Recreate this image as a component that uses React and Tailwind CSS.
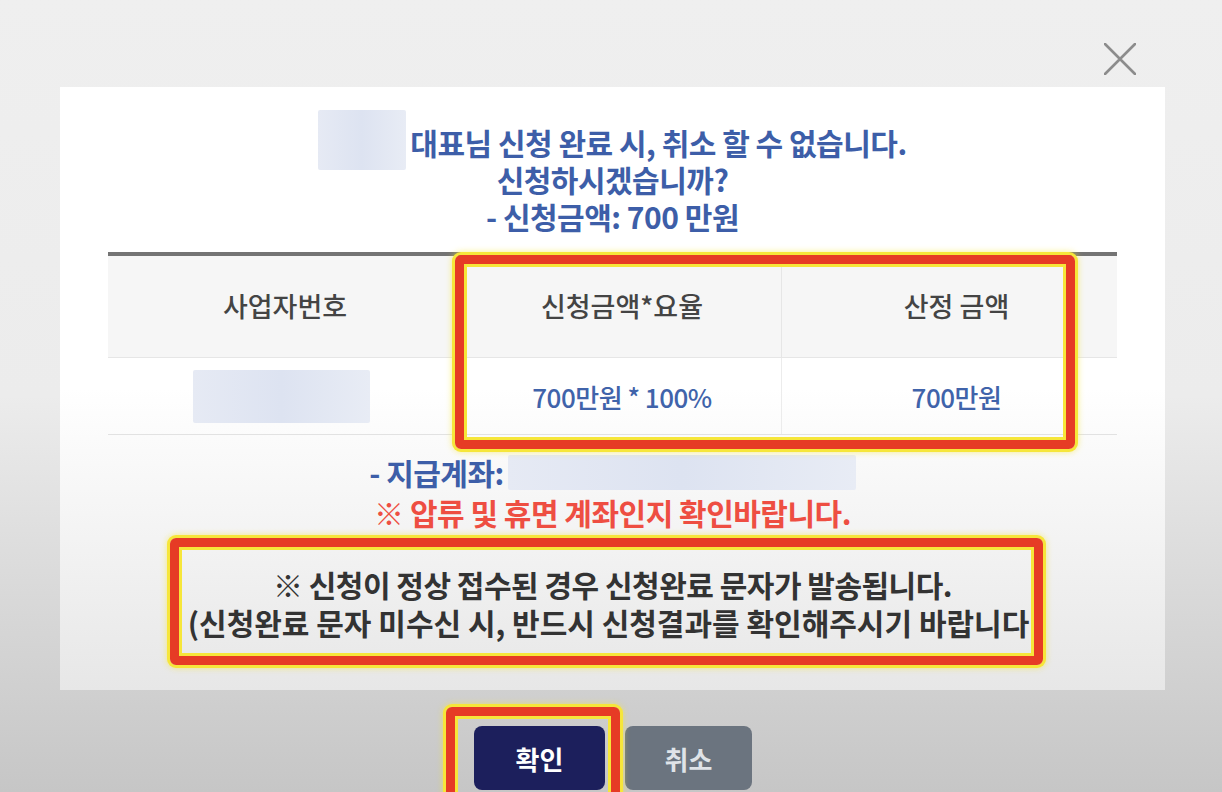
// 신청 확인 모달 (영상 캡처 재현). 하이라이트 박스는 위에 덧그린 주석.
const FONT = { fontFamily: '"Noto Sans CJK KR", "Noto Sans", sans-serif' };

function Blur({ className }) {
  return <span className={`inline-block shrink-0 rounded-[2px] bg-gradient-to-r from-[#e6eaf4] via-[#dde3f1] to-[#e8ecf5] ${className}`} />;
}

function Highlight({ className }) {
  return (
    <div
      className={`pointer-events-none absolute rounded-[6px] border-[9px] border-[#e63b25] shadow-[0_0_0_3px_#f6e63a,inset_0_0_0_3px_#f6e63a,0_0_6px_3px_rgba(246,230,58,0.6)] ${className}`}
    />
  );
}

export default function App() {
  return (
    <div
      className="relative h-[792px] w-[1222px] overflow-hidden bg-gradient-to-b from-[#efefef] via-[#ececec] to-[#c6c6c6]"
      style={FONT}
    >
      {/* 닫기 */}
      <div className="flex h-[87px] justify-end pr-[86px] pt-[43px]">
        <svg width="32" height="32" viewBox="0 0 32 32" className="text-[#8c8c8c]">
          <path d="M1 1L31 31M31 1L1 31" stroke="currentColor" strokeWidth="2.6" strokeLinecap="round" />
        </svg>
      </div>

      {/* 카드 */}
      <div className="ml-[60px] h-[603px] w-[1105px] bg-gradient-to-b from-white via-white to-[#e7e7e7] pt-[37px]">
        <div className="flex flex-col items-center text-[30px] font-bold leading-[37px] tracking-[-0.5px] text-[#3d5ea8]">
          <div className="flex h-[37px] items-center gap-[4px]">
            <Blur className="-mt-[6px] h-[60px] w-[88px]" />
            <span>대표님 신청 완료 시, 취소 할 수 없습니다.</span>
          </div>
          <div>신청하시겠습니까?</div>
          <div>- 신청금액: 700 만원</div>
        </div>

        {/* 표 */}
        <div className="mx-[48px] mt-[17px] border-t-[4px] border-[#747474]">
          <div className="grid h-[102px] grid-cols-[354px_319px_336px] border-b border-[#e6e6e6] bg-[#f6f6f6] text-[27px] font-medium text-[#444]">
            <div className="flex items-center justify-center">사업자번호</div>
            <div className="flex items-center justify-center border-l border-[#e6e6e6]">신청금액*요율</div>
            <div className="flex items-center justify-center border-l border-[#e6e6e6] pl-[14px]">산정 금액</div>
          </div>
          <div className="grid h-[77px] grid-cols-[354px_319px_336px] border-b border-[#e2e2e2] text-[26px] font-medium tracking-[-0.5px] text-[#4063aa]">
            <div className="flex items-center justify-center pr-[8px]">
              <Blur className="h-[53px] w-[177px]" />
            </div>
            <div className="flex items-center justify-center border-l border-[#ececec]">700만원 * 100%</div>
            <div className="flex items-center justify-center border-l border-[#ececec] pl-[14px]">700만원</div>
          </div>
        </div>

        <div className="mt-[17px] flex flex-col items-center text-[30px] font-bold leading-[40px] tracking-[-0.5px]">
          <div className="flex h-[40px] items-center gap-[4px] text-[#3d5ea8]">
            <span>- 지급계좌:</span>
            <Blur className="h-[35px] w-[348px]" />
          </div>
          <div className="text-[#ee4e42]">※ 압류 및 휴면 계좌인지 확인바랍니다.</div>
        </div>

        <div className="mt-[33px] flex flex-col items-center text-[30px] font-bold leading-[38px] text-[#333]">
          <div className="tracking-[-0.5px]">※ 신청이 정상 접수된 경우 신청완료 문자가 발송됩니다.</div>
          <div className="ml-[-8px] whitespace-nowrap">(신청완료 문자 미수신 시, 반드시 신청결과를 확인해주시기 바랍니다</div>
        </div>
      </div>

      {/* 버튼 */}
      <div className="mt-[36px] flex justify-center gap-[20px] pl-[4px]">
        <button className="h-[64px] w-[131px] rounded-[8px] bg-[#1c1f5c] text-[26px] font-bold text-white">확인</button>
        <button className="h-[64px] w-[127px] rounded-[8px] bg-[#6b747f] text-[26px] font-bold text-[#dfe3e8]">취소</button>
      </div>

      {/* 주석 하이라이트 */}
      <Highlight className="left-[455px] top-[255px] h-[194px] w-[620px]" />
      <Highlight className="left-[170px] top-[538px] h-[127px] w-[873px]" />
      <Highlight className="left-[446px] top-[707px] h-[100px] w-[174px]" />
    </div>
  );
}
